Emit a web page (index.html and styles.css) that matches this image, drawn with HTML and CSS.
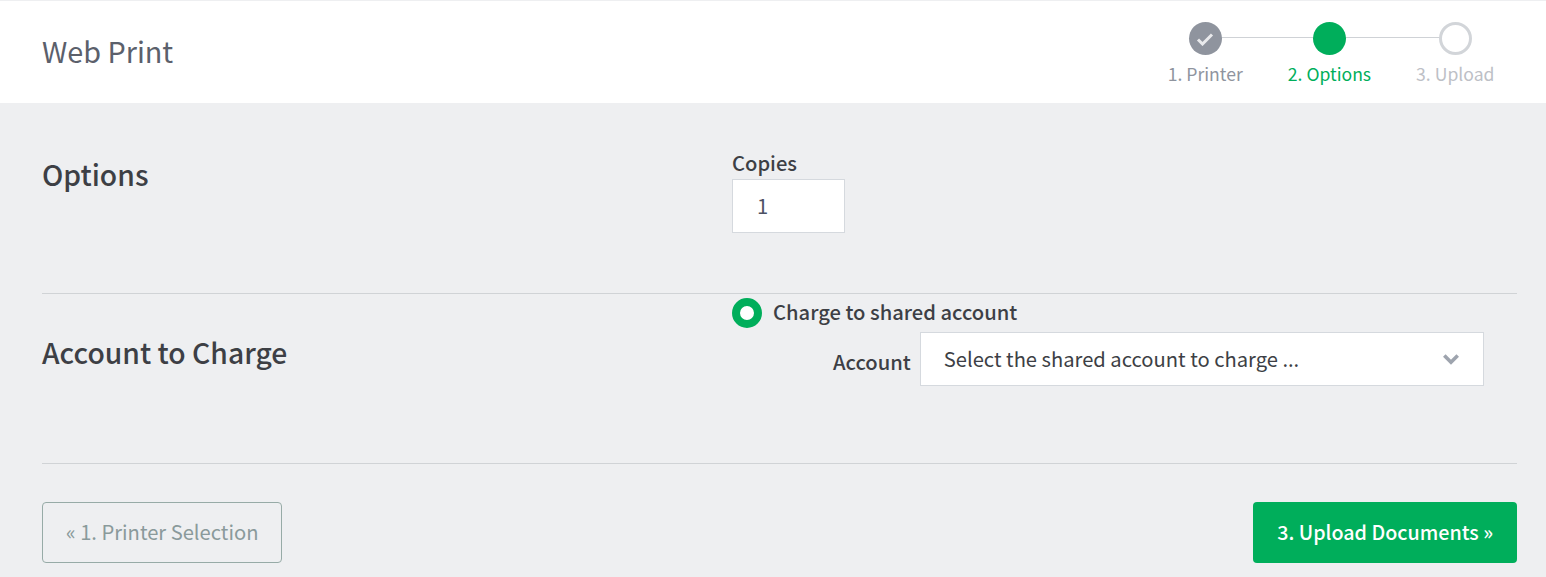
FILE: index.html
```html
<!DOCTYPE html>
<html lang="en">
<head>
<meta charset="utf-8">
<title>Web Print</title>
<link rel="stylesheet" href="styles.css">
</head>
<body>
<header class="topbar">
  <h1 class="app-title">Web Print</h1>
  <ol class="steps">
    <li class="step step-done">
      <span class="step-dot">
        <svg class="step-check" viewBox="0 0 18 14" width="18" height="14"><path d="M2 7.5 L6.5 12 L16 2.5" fill="none" stroke="#e9eaec" stroke-width="3"/></svg>
      </span>
      <span class="step-label">1. Printer</span>
    </li>
    <li class="step step-current">
      <span class="step-dot"></span>
      <span class="step-label">2. Options</span>
    </li>
    <li class="step step-todo">
      <span class="step-dot"></span>
      <span class="step-label">3. Upload</span>
    </li>
  </ol>
</header>
<main class="content">
  <section class="row row-options">
    <h2 class="row-title">Options</h2>
    <div class="row-body">
      <label class="field-label" for="copies">Copies</label>
      <div class="copies-input" id="copies">1</div>
    </div>
  </section>
  <section class="row row-account">
    <h2 class="row-title">Account to Charge</h2>
    <div class="row-body">
      <div class="radio-line">
        <span class="radio"></span>
        <span class="radio-text">Charge to shared account</span>
      </div>
      <div class="account-line">
        <span class="account-label">Account</span>
        <div class="select">
          <span class="select-text">Select the shared account to charge ...</span>
          <svg class="chevron" viewBox="0 0 16 11" width="16" height="11"><path d="M1.3 1.5 L8 8.2 L14.7 1.5" fill="none" stroke="#9ea4ae" stroke-width="3.6"/></svg>
        </div>
      </div>
    </div>
  </section>
  <nav class="actions">
    <a class="btn btn-back">« 1. Printer Selection</a>
    <a class="btn btn-next">3. Upload Documents »</a>
  </nav>
</main>
</body>
</html>
```
FILE: styles.css
```css
* { box-sizing: border-box; }
html, body { margin: 0; height: 100%; overflow: hidden; }
body {
  background: #eeeff1;
  color: #3d3f45;
  font-family: "Noto Sans CJK SC", "Source Sans Pro", "Noto Sans", sans-serif;
}
.topbar {
  height: 103px;
  background: #fff;
  border-top: 1px solid #eeeff1;
  padding: 0 51.5px 0 42px;
  display: flex;
  justify-content: space-between;
}
.app-title {
  margin: 0;
  padding-top: 29px;
  font-size: 28.8px;
  line-height: 42px;
  font-weight: 400;
  color: #5b606b;
}
.steps {
  list-style: none;
  margin: 0;
  padding: 21px 0 0;
  display: flex;
  gap: 45px;
}
.step {
  position: relative;
  display: flex;
  flex-direction: column;
  align-items: center;
  font-size: 17.6px;
  line-height: 26px;
}
.step-dot {
  width: 33px;
  height: 33px;
  border-radius: 50%;
  display: flex;
  align-items: center;
  justify-content: center;
  margin-bottom: 6px;
  position: relative;
  z-index: 1;
}
.step:not(:last-child)::after {
  content: "";
  position: absolute;
  top: 15px;
  left: 50%;
  width: 128px;
  height: 1px;
  background: #cfd2d6;
}
.step-done .step-dot { background: #8f949e; }
.step-done .step-label { color: #8f949e; }
.step-current .step-dot { background: #00ae5b; }
.step-current .step-label { color: #00ae5b; }
.step-todo .step-dot { background: #fff; border: 3px solid #d2d5d9; }
.step-todo .step-label { color: #bdc0c6; }
.content { padding: 0 29px 0 42px; }
.row {
  display: flex;
  border-bottom: 1px solid #d0d3d6;
}
.row-options { height: 191px; padding-top: 46px; }
.row-account { height: 170px; }
.row-title {
  margin: 0;
  width: 690px;
  flex: none;
  font-size: 28.3px;
  line-height: 42px;
  font-weight: 500;
  color: #3d3f45;
}
.row-options .row-title { padding-top: 4px; }
.row-account .row-title { padding-top: 37px; }
.row-body { flex: 1; }
.field-label {
  display: block;
  font-size: 20.16px;
  line-height: 28px;
  margin-bottom: 2px;
  font-weight: 500;
}
.copies-input {
  width: 113px;
  height: 54px;
  background: #fff;
  border: 1px solid #d5d9de;
  padding-left: 24px;
  font-size: 20.16px;
  line-height: 52px;
  color: #4c5163;
}
.radio-line {
  display: flex;
  align-items: center;
  gap: 11px;
  height: 38px;
}
.radio {
  width: 30px;
  height: 30px;
  border-radius: 50%;
  background: #fff;
  border: 8.5px solid #00ae5b;
}
.radio-text {
  font-size: 20.16px;
  line-height: 26px;
  margin-bottom: 2px;
  font-weight: 500;
}
.account-line {
  display: flex;
  align-items: flex-start;
  margin-left: 101px;
  gap: 9px;
}
.account-label {
  font-size: 20.16px;
  line-height: 28px;
  font-weight: 500;
  padding-top: 16px;
}
.select {
  width: 564px;
  height: 54px;
  background: #fff;
  border: 1px solid #d5d9de;
  padding: 0 24px 0 23px;
  display: flex;
  align-items: center;
  justify-content: space-between;
  font-size: 20.16px;
}
.select-text { margin-bottom: 2px; }
.actions {
  display: flex;
  justify-content: space-between;
  padding-top: 38px;
}
.btn {
  height: 61px;
  border-radius: 4px;
  font-size: 20.16px;
  line-height: 58px;
  padding: 0 23px;
  border: 1px solid transparent;
}
.btn-back { border-color: #97aba7; color: #8a9a9b; }
.btn-next { background: #00ae5b; color: #fff; font-weight: 500; font-size: 19.7px; }
```
